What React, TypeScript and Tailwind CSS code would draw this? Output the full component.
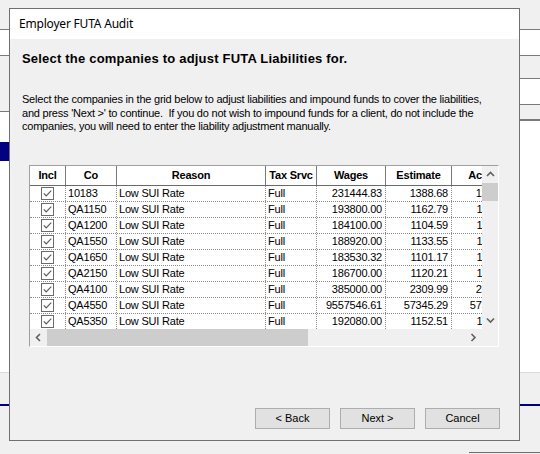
import React from "react";

const rows: [string, string, string, string][] = [
  ["10183", "231444.83", "1388.68", "1388.68"],
  ["QA1150", "193800.00", "1162.79", "1162.79"],
  ["QA1200", "184100.00", "1104.59", "1104.59"],
  ["QA1550", "188920.00", "1133.55", "1133.55"],
  ["QA1650", "183530.32", "1101.17", "1101.17"],
  ["QA2150", "186700.00", "1120.21", "1120.21"],
  ["QA4100", "385000.00", "2309.99", "2309.99"],
  ["QA4550", "9557546.61", "57345.29", "57345.29"],
  ["QA5350", "192080.00", "1152.51", "1152.51"],
];

function Check() {
  return (
    <svg width="13" height="13" viewBox="0 0 13 13">
      <rect x="0.5" y="0.5" width="12" height="12" fill="#fff" stroke="#6b6b6b" />
      <polyline points="2.8,6.3 5.2,8.8 10.2,3.6" fill="none" stroke="#5a5a5a" strokeWidth="1.2" />
    </svg>
  );
}

function Chevron({ dir }: { dir: "up" | "down" | "left" | "right" }) {
  const pts =
    dir === "up"
      ? "1,5 4.5,1.5 8,5"
      : dir === "down"
      ? "1,1.5 4.5,5 8,1.5"
      : dir === "left"
      ? "5,1 1.5,4.5 5,8"
      : "1.5,1 5,4.5 1.5,8";
  const w = dir === "up" || dir === "down" ? 9 : 7;
  const h = dir === "up" || dir === "down" ? 7 : 9;
  return (
    <svg width={w} height={h} viewBox={`0 0 ${w} ${h}`}>
      <polyline points={pts} fill="none" stroke="#606060" strokeWidth="1.6" />
    </svg>
  );
}

const hdr = "h-full flex items-center justify-center border-r border-[#7a7a7a] font-bold shrink-0";
const cell = "h-full flex items-center border-r border-dotted border-[#8a8a8a] shrink-0 overflow-hidden whitespace-nowrap";

export default function App() {
  return (
    <div className="relative w-[540px] h-[454px] overflow-hidden bg-[#f0f0f0] font-['Liberation_Sans',Arial,sans-serif] text-black">
      {/* background window */}
      <div className="flex flex-col h-full">
        <div className="flex h-[372px]">
          <div className="w-[9px] flex flex-col">
            <div className="h-[29px] bg-[#f0f0f0]" />
            <div className="h-px bg-[#7a7a7a]" />
            <div className="h-[25px] bg-white" />
            <div className="h-px bg-[#7a7a7a]" />
            <div className="h-[55px] bg-[#f0f0f0]" />
            <div className="h-px bg-[#7a7a7a]" />
            <div className="h-[30px] bg-white" />
            <div className="h-[19px] bg-[#000080]" />
            <div className="flex-1 bg-white" />
          </div>
          <div className="flex-1 bg-[#f0f0f0]" />
          <div className="w-[20px] flex flex-col">
            <div className="h-[29px] bg-[#f0f0f0]" />
            <div className="h-px bg-[#7a7a7a]" />
            <div className="h-[25px] bg-white" />
            <div className="h-px bg-[#7a7a7a]" />
            <div className="h-[22px] bg-[#f0f0f0]" />
            <div className="h-px bg-[#7a7a7a]" />
            <div className="h-[25px] bg-white" />
            <div className="h-px bg-[#7a7a7a]" />
            <div className="h-[14px] bg-[#f0f0f0]" />
            <div className="h-[2px] bg-[#7a7a7a]" />
            <div className="flex-1 bg-white" />
          </div>
        </div>
        <div className="h-px bg-[#dcdcdc]" />
        <div className="h-[31px] bg-[#f0f0f0]" />
        <div className="h-[2px] bg-[#000080]" />
        <div className="h-[46px] bg-[#f0f0f0]" />
        <div className="h-px flex">
          <div className="flex-1" />
          <div className="w-[71px] bg-[#6e6e6e]" />
        </div>
        <div className="flex-1" />
      </div>

      {/* dialog window */}
      <div className="absolute left-[9px] top-[8px] w-[511px] h-[433px] border border-[#707070] bg-[#f0f0f0] flex flex-col">
        <div className="h-[30px] bg-white flex items-center pl-[9px] text-[12px] font-['Noto_Sans',sans-serif] tracking-[-0.2px]">
          Employer FUTA Audit
        </div>
        <div className="flex-1 flex flex-col">
          <div className="mt-[12px] pl-[12px] h-[16px] leading-[16px] text-[13px] font-bold tracking-[0.2px]">
            Select the companies to adjust FUTA Liabilities for.
          </div>
          <div className="mt-[26px] pl-[12px] pr-[20px] text-[11px] leading-[13.5px] tracking-[-0.22px]">
            Select the companies in the grid below to adjust liabilities and impound funds to cover the liabilities,
            <br />
            and press 'Next &gt;' to continue.&nbsp; If you do not wish to impound funds for a client, do not include the
            <br />
            companies, you will need to enter the liability adjustment manually.
          </div>

          {/* grid */}
          <div className="mt-[31px] ml-[19px] w-[470px] h-[182px] border border-t-[#a0a0a0] border-l-[#a0a0a0] border-r-white border-b-white flex flex-col text-[11px] tracking-[-0.2px]">
            <div className="flex h-[163px]">
              <div className="w-[452px] overflow-hidden bg-white flex flex-col">
                <div className="h-[20px] flex border-b border-[#6a6a6a] shrink-0">
                  <div className={`${hdr} w-[36px]`}>Incl</div>
                  <div className={`${hdr} w-[51px]`}>Co</div>
                  <div className={`${hdr} w-[149px]`}>Reason</div>
                  <div className={`${hdr} w-[51px] whitespace-nowrap`}>Tax Srvc</div>
                  <div className={`${hdr} w-[69px]`}>Wages</div>
                  <div className={`${hdr} w-[66px]`}>Estimate</div>
                  <div className="h-full flex items-center justify-center font-bold shrink-0 w-[64px] pl-[1px]">Actual</div>
                </div>
                {rows.map((r) => (
                  <div key={r[0]} className="h-[16px] flex border-b border-dotted border-[#8a8a8a] shrink-0">
                    <div className={`${cell} w-[36px] justify-center`}>
                      <Check />
                    </div>
                    <div className={`${cell} w-[51px] pl-[2px]`}>{r[0]}</div>
                    <div className={`${cell} w-[149px] pl-[2px]`}>Low SUI Rate</div>
                    <div className={`${cell} w-[51px] pl-[2px]`}>Full</div>
                    <div className={`${cell} w-[69px] justify-end pr-[3px]`}>{r[1]}</div>
                    <div className={`${cell} w-[66px] justify-end pr-[3px]`}>{r[2]}</div>
                    <div className="h-full flex items-center justify-end pr-[3px] shrink-0 w-[65px] whitespace-nowrap">{r[3]}</div>
                  </div>
                ))}
              </div>
              <div className="w-[16px] bg-[#f0f0f0] flex flex-col">
                <div className="h-[17px] flex items-center justify-center">
                  <Chevron dir="up" />
                </div>
                <div className="h-[18px] bg-[#cdcdcd]" />
                <div className="flex-1" />
                <div className="h-[17px] flex items-center justify-center">
                  <Chevron dir="down" />
                </div>
              </div>
            </div>
            <div className="flex h-[17px]">
              <div className="w-[452px] bg-[#f0f0f0] flex">
                <div className="w-[17px] flex items-center justify-center">
                  <Chevron dir="left" />
                </div>
                <div className="w-[261px] bg-[#cdcdcd]" />
                <div className="flex-1" />
                <div className="w-[17px] flex items-center justify-center">
                  <Chevron dir="right" />
                </div>
              </div>
              <div className="w-[16px] bg-[#f0f0f0]" />
            </div>
          </div>

          {/* buttons */}
          <div className="mt-auto mb-[11px] pr-[19px] flex justify-end gap-[10px] text-[11px]">
            <button className="w-[75px] h-[21px] bg-[#e1e1e1] border border-[#adadad] flex items-center justify-center">
              &lt; Back
            </button>
            <button className="w-[75px] h-[21px] bg-[#e1e1e1] border border-[#adadad] flex items-center justify-center">
              Next &gt;
            </button>
            <button className="w-[75px] h-[21px] bg-[#e1e1e1] border border-[#adadad] flex items-center justify-center">
              Cancel
            </button>
          </div>
        </div>
      </div>
    </div>
  );
}
